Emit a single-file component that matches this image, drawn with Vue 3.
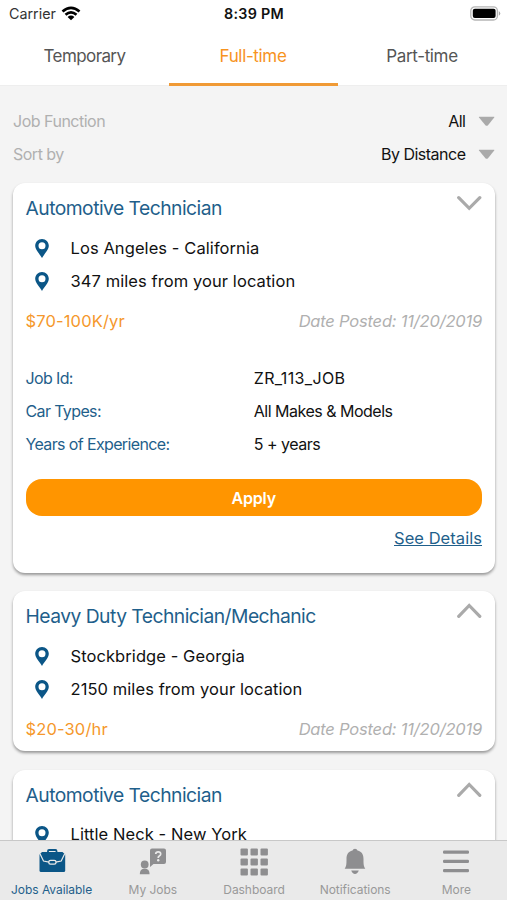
<script setup>
const tabs = ['Temporary', 'Full-time', 'Part-time']
const filters = [
  { label: 'Job Function', value: 'All' },
  { label: 'Sort by', value: 'By Distance' },
]
const jobs = [
  {
    title: 'Automotive Technician',
    lines: ['Los Angeles - California', '347 miles from your location'],
    pay: '$70-100K/yr',
    posted: 'Date Posted: 11/20/2019',
    details: [
      ['Job Id:', 'ZR_113_JOB'],
      ['Car Types:', 'All Makes & Models'],
      ['Years of Experience:', '5 + years'],
    ],
  },
  {
    title: 'Heavy Duty Technician/Mechanic',
    lines: ['Stockbridge - Georgia', '2150 miles from your location'],
    pay: '$20-30/hr',
    posted: 'Date Posted: 11/20/2019',
  },
  {
    title: 'Automotive Technician',
    lines: ['Little Neck - New York'],
  },
]
</script>

<template>
  <div class="screen">
    <header class="status">
      <div class="carrier">
        <span>Carrier</span>
        <svg width="20" height="15" viewBox="0 0 20 15">
          <g fill="none" stroke="#000" stroke-width="2.7">
            <path d="M1.5 5.5Q10-1.8 18.500 5.500" />
            <path d="M4.500 8.800Q10 4.100 15.500 8.800" />
          </g>
          <path d="M6.600 10.900Q10 8.200 13.400 10.900L10 14.300Z" />
        </svg>
      </div>
      <div class="clock">8:39 PM</div>
      <div class="battery">
        <svg width="31" height="15" viewBox="0 0 31 15">
          <rect x=".8" y=".8" width="26.600" height="13.200" rx="4" fill="#fff" stroke="#b5b5b5" stroke-width="1.300" />
          <rect x="2.800" y="2.800" width="22.800" height="9.300" rx="2" />
          <path d="M28.800 5q3 2.400 0 4.800Z" fill="#a8a8a8" />
        </svg>
      </div>
    </header>

    <nav class="tabs">
      <div v-for="(t, i) in tabs" :key="t" class="tab" :class="{ active: i === 1 }"><span>{{ t }}</span></div>
    </nav>

    <main class="content">
      <section class="filters">
        <div v-for="f in filters" :key="f.label" class="filter">
          <span class="filter-label">{{ f.label }}</span>
          <span class="filter-value">{{ f.value }}</span>
          <svg width="17" height="11" viewBox="0 0 17 11"><path d="M1.300.7H16Q16.800.8 16.200 1.600L10 9.200Q8.700 10.400 7.400 9.200L1 1.600Q.5.8 1.300.7Z" fill="#aaa" /></svg>
        </div>
      </section>

      <article v-for="(job, i) in jobs" :key="i" class="card">
        <div class="card-head">
          <h2>{{ job.title }}</h2>
          <svg width="26" height="16" viewBox="0 0 26 16" fill="none" stroke="#aaa" stroke-width="3.200" stroke-linecap="round">
            <path :d="job.details ? 'M2.700 2.700L13.200 13.300L23.800 2.700' : 'M2.700 13.300L13.200 2.500L23.800 13.300'" />
          </svg>
        </div>
        <div v-for="line in job.lines" :key="line" class="place">
          <svg width="14" height="19" viewBox="0 0 14 19">
            <path fill="#0b5687" fill-rule="evenodd" d="M7 0C3.100 0 .2 3 .2 6.800C.2 11 4.500 14.600 7 19C9.500 14.600 13.800 11 13.800 6.800C13.800 3 10.900 0 7 0ZM7 3.300A3.500 3.500 0 1 1 7 10.300A3.500 3.500 0 1 1 7 3.300Z" />
          </svg>
          <span>{{ line }}</span>
        </div>
        <div class="pay-row">
          <span v-if="job.pay" class="pay">{{ job.pay }}</span>
          <span v-if="job.posted" class="posted">{{ job.posted }}</span>
        </div>
        <template v-if="job.details">
          <dl class="details">
            <div v-for="d in job.details" :key="d[0]" class="detail">
              <dt>{{ d[0] }}</dt>
              <dd>{{ d[1] }}</dd>
            </div>
          </dl>
          <button class="apply">Apply</button>
          <a class="see">See Details</a>
        </template>
      </article>
    </main>

    <footer class="bar">
      <div class="item current">
        <svg width="28" height="28" viewBox="0 0 28 28">
          <path d="M10 4V3Q10 2 11 2H17.500Q18.500 2 18.500 3V4" fill="none" stroke="#0b5687" stroke-width="1.800" />
          <path d="M4 4H24.500L27.200 6.500V22.500Q27.200 24 25.700 24H3Q1.500 24 1.500 22.500V6.500Z" fill="#0b5687" />
          <path d="M2 5.800L5.500 13L11 14.200H17.700L23.200 13L26.700 5.800" fill="none" stroke="#eaeaea" stroke-width="1.200" />
          <rect x="10.800" y="12.400" width="7.200" height="3.700" rx="1.700" fill="#0b5687" stroke="#eaeaea" stroke-width="1.300" />
        </svg>
        <span>Jobs Available</span>
      </div>
      <div class="item">
        <svg width="28" height="28" viewBox="0 0 28 28" fill="#8e8e90">
          <path d="M13 .5H25Q27 .5 27 2.500V14Q27 16 25 16H14.500L11 19V2.500Q11 .5 13 .5Z" />
          <path d="M16.700 6Q16.900 3.900 19.200 3.900Q21.700 3.900 21.700 6Q21.700 7.300 20.300 8Q19.200 8.600 19.200 9.900" fill="none" stroke="#eaeaea" stroke-width="1.700" />
          <circle cx="19.200" cy="12.300" r="1.200" fill="#eaeaea" />
          <circle cx="5.700" cy="16.500" r="3.900" />
          <path d="M.8 26.200Q.8 20.800 5.700 20.800Q10.600 20.800 10.600 26.200Z" />
        </svg>
        <span>My Jobs</span>
      </div>
      <div class="item">
        <svg width="28" height="28" viewBox="0 0 28 28" fill="#8e8e90">
          <template v-for="r in 3" :key="r">
            <rect v-for="c in 3" :key="c" :x="c * 10 - 9.500" :y="r * 10 - 9.500" width="7.400" height="7" rx="1" />
          </template>
        </svg>
        <span>Dashboard</span>
      </div>
      <div class="item">
        <svg width="28" height="28" viewBox="0 0 28 28" fill="#8e8e90">
          <path d="M14 .7Q16 .7 16.500 2.600C21 3.700 22.500 7 22.500 11C22.500 16 22.500 18 24.300 20.800H3.700C5.500 18 5.500 16 5.500 11C5.500 7 7 3.700 11.500 2.600Q12 .7 14 .7ZM10.200 22.600H17.800Q16.500 26 14 26Q11.500 26 10.200 22.600Z" />
        </svg>
        <span>Notifications</span>
      </div>
      <div class="item">
        <svg width="28" height="28" viewBox="0 0 28 28" fill="#8e8e90">
          <rect x="1" y="2.500" width="26" height="3.200" rx="1.200" />
          <rect x="1" y="11.700" width="26" height="3.200" rx="1.200" />
          <rect x="1" y="21" width="26" height="3.200" rx="1.200" />
        </svg>
        <span>More</span>
      </div>
    </footer>
  </div>
</template>

<style>
body {
  margin: 0;
}
</style>

<style scoped>
.screen {
  width: 507px;
  height: 900px;
  overflow: hidden;
  display: flex;
  flex-direction: column;
  background: #f4f4f4;
  font-family: Inter, "Liberation Sans", sans-serif;
  font-size: 16px;
  color: #111;
}
.screen svg {
  display: block;
  flex: none;
}
.status {
  flex: none;
  height: 28px;
  box-sizing: border-box;
  padding: 0 6px 1px 9px;
  display: grid;
  grid-template-columns: 1fr auto 1fr;
  align-items: center;
  background: #fff;
  font-size: 14.3px;
}
.carrier {
  display: flex;
  align-items: center;
  gap: 5px;
  color: #333;
}
.carrier svg {
  margin-top: -1px;
}
.clock {
  font-weight: 600;
  letter-spacing: 0.3px;
  padding-right: 2px;
}
.battery {
  display: flex;
  justify-content: flex-end;
}
.tabs {
  flex: none;
  height: 58px;
  display: grid;
  grid-template-columns: repeat(3, 1fr);
  background: #fff;
  border-bottom: 1px solid #eee;
  box-sizing: border-box;
}
.tab {
  display: flex;
  align-items: center;
  justify-content: center;
  font-size: 17px;
  letter-spacing: -0.35px;
  color: #555;
  border-bottom: 3px solid transparent;
  margin-bottom: -1px;
}
.tab span {
  padding-right: 1px;
}
.tab:first-child {
  letter-spacing: -0.6px;
}
.tab:first-child span {
  padding-right: 0;
}
.tab.active {
  color: #f7931e;
  border-color: #f09a35;
}
.content {
  flex: 1;
  min-height: 0;
  overflow: hidden;
  padding: 18px 12.5px 0 13px;
}
.filters {
  height: 79px;
}
.filter {
  height: 33px;
  display: flex;
  align-items: center;
  letter-spacing: -0.5px;
}
.filter svg {
  margin-top: 1px;
}
.filter-label {
  flex: 1;
  color: #b0b0b0;
}
.filter-value {
  margin-right: 12px;
}
.card {
  background: #fff;
  border-radius: 12px;
  box-shadow: 0 2px 3px rgba(0, 0, 0, 0.38);
  padding: 12px 12.5px 6px;
  margin-bottom: 18.6px;
}
.card-head {
  height: 36px;
  display: flex;
  justify-content: space-between;
}
.card-head h2 {
  margin: 0;
  font-size: 19.3px;
  line-height: 26px;
  font-weight: 400;
  letter-spacing: -0.53px;
  color: #1f5f8b;
}
.place {
  height: 33px;
  display: flex;
  align-items: center;
  gap: 22px;
  padding-left: 9px;
  font-size: 16.5px;
  letter-spacing: 0.08px;
}
.place svg {
  margin-top: 2px;
}
.pay-row {
  height: 33px;
  padding-top: 7px;
  display: flex;
  align-items: center;
  justify-content: space-between;
  font-size: 16.5px;
}
.pay {
  color: #f5982c;
  letter-spacing: 0.14px;
}
.posted {
  font-style: italic;
  color: #b0b0b0;
  letter-spacing: -0.2px;
}
.details {
  margin: 24px 0 19px;
}
.detail {
  height: 33px;
  display: grid;
  grid-template-columns: 1fr 1fr;
  align-items: center;
  letter-spacing: -0.5px;
}
.detail dt {
  color: #1f5f8b;
  letter-spacing: -0.63px;
}
.detail dd {
  margin: 0;
}
.detail:first-child dd {
  letter-spacing: 0.37px;
}
.apply {
  display: block;
  width: 100%;
  height: 37px;
  border: 0;
  border-radius: 16px;
  background: #ff9500;
  color: #fff;
  font: 600 16px Inter, sans-serif;
  letter-spacing: -0.2px;
}
.see {
  display: block;
  width: fit-content;
  margin: 10px 0 15.6px auto;
  font-size: 16.5px;
  line-height: 25px;
  letter-spacing: 0.05px;
  color: #1f5f8b;
  text-decoration: underline;
}
.bar {
  flex: none;
  height: 60px;
  box-sizing: border-box;
  border-top: 1px solid #c8c8c8;
  background: #eaeaea;
  display: grid;
  grid-template-columns: repeat(5, 1fr);
  padding: 7px 0 0 1px;
}
.item {
  display: flex;
  flex-direction: column;
  align-items: center;
  gap: 6px;
  color: #999;
  font-size: 12px;
  line-height: 16px;
  letter-spacing: -0.05px;
  white-space: nowrap;
}
.item.current {
  color: #1f5f8b;
}
</style>
